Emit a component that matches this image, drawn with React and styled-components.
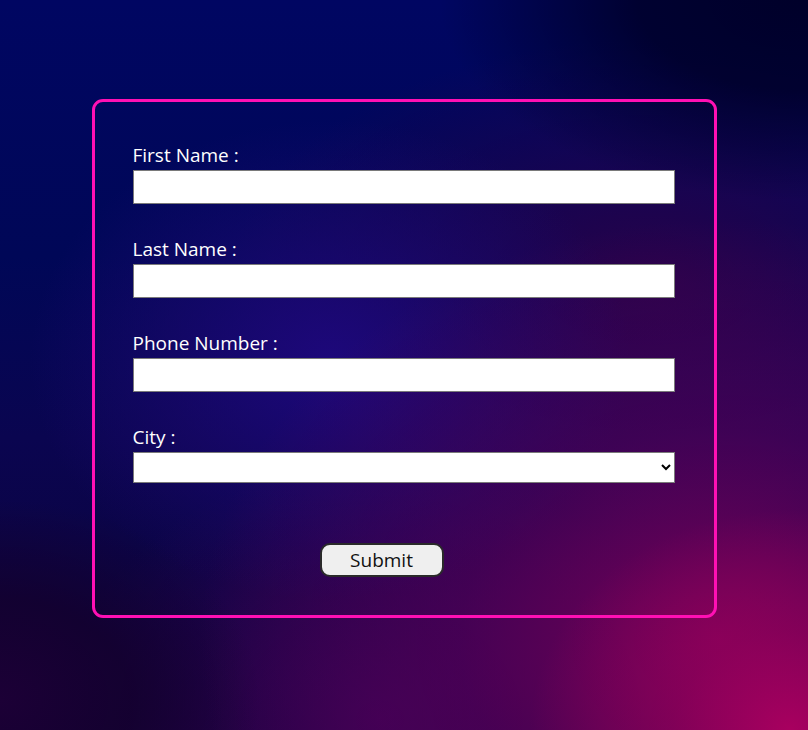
import React from "react";
import styled, { createGlobalStyle } from "styled-components";

const Global = createGlobalStyle`
  html, body { margin: 0; padding: 0; }
  body {
    min-height: 730px;
    font-family: "Open Sans", "Noto Sans", sans-serif;
    background-color: #12043f;
    background-image:
      radial-gradient(ellipse 260px 220px at 790px 730px, #a8005f 0%, rgba(150,0,90,0.6) 45%, rgba(120,0,90,0) 100%),
      radial-gradient(ellipse 520px 420px at 720px 640px, rgba(130,0,90,0.95) 0%, rgba(90,0,90,0.6) 50%, rgba(70,0,90,0) 100%),
      radial-gradient(ellipse 300px 240px at 330px 360px, rgba(30,8,125,0.95) 0%, rgba(30,8,115,0.5) 55%, rgba(20,5,100,0) 100%),
      radial-gradient(ellipse 260px 200px at 0px 700px, #1c0036 0%, rgba(20,0,45,0.8) 50%, rgba(20,0,45,0) 100%),
      radial-gradient(ellipse 320px 260px at 380px 720px, rgba(60,0,85,0.9) 0%, rgba(50,0,80,0) 100%),
      radial-gradient(ellipse 360px 200px at 800px 0px, #00002a 0%, rgba(0,0,40,0.85) 45%, rgba(0,0,50,0) 100%),
      radial-gradient(ellipse 420px 240px at 650px 280px, rgba(50,0,70,0.8) 0%, rgba(40,0,70,0) 100%),
      linear-gradient(180deg, #000662 0%, #000757 35%, #0a0550 60%, #0d0338 100%);
  }
`;

const Page = styled.div`
  display: flex;
  justify-content: center;
  padding-top: 99px;
  min-height: 730px;
  box-sizing: border-box;
`;

const Card = styled.form`
  width: 625px;
  height: 519px;
  box-sizing: border-box;
  border: 3px solid #ff10b4;
  border-radius: 11px;
  padding: 41px 39px 38px 38px;
  display: flex;
  flex-direction: column;
`;

const Field = styled.div`
  display: flex;
  flex-direction: column;
  margin-bottom: ${(p) => (p.$last ? "60px" : "33px")};
`;

const Label = styled.label`
  color: #ffffff;
  font-size: 19px;
  line-height: 24px;
  margin-bottom: 3px;
`;

const Input = styled.input`
  height: 34px;
  box-sizing: border-box;
  border: 1px solid #7a7a7a;
  background: #ffffff;
  margin: 0;
  padding: 0 4px;
  font-size: 16px;
  outline: none;
`;

const Select = styled.select`
  height: 31px;
  box-sizing: border-box;
  border: 1px solid #7a7a7a;
  border-radius: 0;
  background: #ffffff;
  margin: 0;
  font-size: 16px;
  outline: none;
`;

const ButtonRow = styled.div`
  display: flex;
  padding-left: 187px;
`;

const SubmitButton = styled.button`
  width: 124px;
  height: 34px;
  box-sizing: border-box;
  background: #efefef;
  border: 2px solid #2a2a2a;
  border-radius: 10px;
  font-family: "Open Sans", "Noto Sans", sans-serif;
  font-size: 19px;
  color: #111;
  padding: 0;
  cursor: pointer;
`;

export default function App() {
  return (
    <>
      <Global />
      <Page>
        <Card onSubmit={(e) => e.preventDefault()}>
          <Field>
            <Label htmlFor="fn">First Name :</Label>
            <Input id="fn" type="text" />
          </Field>
          <Field>
            <Label htmlFor="ln">Last Name :</Label>
            <Input id="ln" type="text" />
          </Field>
          <Field>
            <Label htmlFor="ph">Phone Number :</Label>
            <Input id="ph" type="text" />
          </Field>
          <Field $last>
            <Label htmlFor="city">City :</Label>
            <Select id="city" defaultValue="">
              <option value=""></option>
            </Select>
          </Field>
          <ButtonRow>
            <SubmitButton type="submit">Submit</SubmitButton>
          </ButtonRow>
        </Card>
      </Page>
    </>
  );
}
